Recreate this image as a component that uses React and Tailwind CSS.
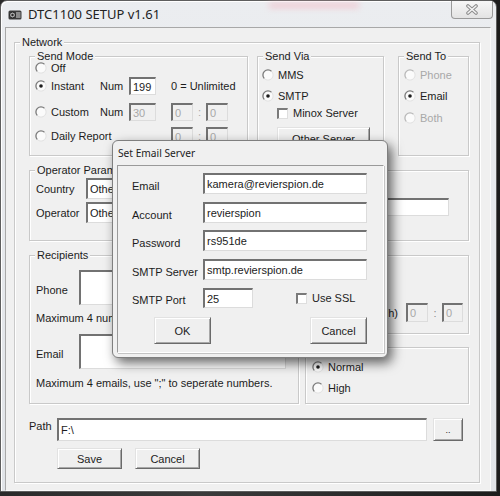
import React from 'react';

const sunk =
  'border-t-2 border-l-2 border-r border-b border-t-[#727272] border-l-[#727272] border-r-[#dcdcdc] border-b-[#dcdcdc]';
const raised =
  'bg-[#efefef] border border-t-[#e2e2e2] border-l-[#e2e2e2] border-r-[#6a6a6a] border-b-[#6a6a6a] shadow-[inset_1px_1px_0_#fff,inset_-1px_-1px_0_#a8a8a8]';

function Field({ value = '', disabled = false, className = '' }) {
  return (
    <div
      className={`${sunk} ${disabled ? 'bg-[#f0f0f0] text-[#a8a8a8]' : 'bg-white'} flex items-center pl-[2px] whitespace-nowrap overflow-hidden shrink-0 ${className}`}
    >
      {value}
    </div>
  );
}

function Button({ children, className = '' }) {
  return <div className={`${raised} flex items-center justify-center shrink-0 ${className}`}>{children}</div>;
}

function Radio({ checked = false, disabled = false }) {
  return (
    <svg width="12" height="12" viewBox="0 0 12 12" className="shrink-0">
      <circle cx="6" cy="6" r="5" fill="#fbfbfb" />
      <path d="M9.6 2.4 A5 5 0 0 0 2.4 9.6" fill="none" stroke={disabled ? '#b8b8b8' : '#7a7a7a'} strokeWidth="1.3" />
      <path d="M2.4 9.6 A5 5 0 0 0 9.6 2.4" fill="none" stroke="#e2e2e2" strokeWidth="1" />
      {checked && <circle cx="6" cy="6" r="1.8" fill="#1c1c1c" />}
    </svg>
  );
}

function Check() {
  return (
    <div className="w-[11px] h-[11px] shrink-0 bg-white border-t-2 border-l-2 border-r border-b border-t-[#7a7a7a] border-l-[#7a7a7a] border-r-[#dedede] border-b-[#dedede]" />
  );
}

function Option({ label, checked, disabled, className = '' }) {
  return (
    <div className={`flex items-center gap-[4px] shrink-0 ${disabled ? 'text-[#a8a8a8]' : ''} ${className}`}>
      <Radio checked={checked} disabled={disabled} />
      <span className="whitespace-nowrap">{label}</span>
    </div>
  );
}

// group box: border with its caption cut into the top line; pad applies to the body only
function Group({ label, className = '', pad = '', children }) {
  return (
    <div className={`border border-[#c9c9c9] shadow-[inset_1px_1px_0_#fff,1px_1px_0_#fff] shrink-0 ${className}`}>
      {label ? (
        <div className="-mt-[8px] ml-[5px] px-[2px] h-[14px] w-fit bg-[#f0f0f0] whitespace-nowrap">{label}</div>
      ) : (
        <div className="h-[6px]" />
      )}
      <div className={pad}>{children}</div>
    </div>
  );
}

function EmailServerDialog() {
  const rows = [
    ['Email', 'kamera@revierspion.de', 'mt-[7px]'],
    ['Account', 'revierspion', 'mt-[8px]'],
    ['Password', 'rs951de', 'mt-[7px]'],
    ['SMTP Server', 'smtp.revierspion.de', 'mt-[8px]'],
  ];
  return (
    <div className="absolute left-[112px] top-[140px] w-[276px] h-[218px] bg-[#f0f0f0] border border-[#7f7f7f] rounded-[6px] shadow-[4px_5px_12px_rgba(0,0,0,0.6)]">
      <div className="h-[24px] pl-[5px] flex items-center font-['Noto_Sans','Open_Sans',sans-serif] text-[10.2px] text-[#222]">
        Set Email Server
      </div>
      <div className="ml-[4px] w-[267px] h-[188px] pl-[14px] border border-t-[#9a9a9a] border-l-[#9a9a9a] border-r-[#fff] border-b-[#fff] shadow-[1px_1px_0_#c4c4c4]">
        {rows.map(([label, value, mt]) => (
          <div key={label} className={`${mt} h-[21px] flex items-center`}>
            <span className="w-[71px] pt-[4px]">{label}</span>
            <Field value={value} className="w-[164px] h-[21px]" />
          </div>
        ))}
        <div className="mt-[8px] h-[20px] flex items-center">
          <span className="w-[71px] pt-[3px]">SMTP Port</span>
          <Field value="25" className="w-[50px] h-[20px]" />
          <div className="ml-[43px]">
            <Check />
          </div>
          <span className="ml-[5px]">Use SSL</span>
        </div>
        <div className="mt-[9px] flex">
          <Button className="ml-[22px] w-[57px] h-[27px]">OK</Button>
          <Button className="ml-[99px] w-[57px] h-[27px]">Cancel</Button>
        </div>
      </div>
    </div>
  );
}

export default function App() {
  return (
    <div className="relative w-[500px] h-[496px] overflow-hidden bg-[linear-gradient(90deg,#2a2a2a,#3b3b3b_40%,#1c1c1c)] font-['Liberation_Sans',Arial,sans-serif] text-[11px] leading-[14px] text-[#1c1c1c]">
      <div className="w-[497px] h-[492px] bg-[linear-gradient(#ebedf0,#e1e4e8)] border border-[#5e5e5e] rounded-t-[7px] flex flex-col shadow-[inset_1px_1px_0_#fff]">
        {/* title bar */}
        <div className="relative h-[26px] flex items-start shrink-0">
          <span className="absolute left-[268px] top-[2px] w-[90px] h-[5px] bg-[#f3b9c4] blur-[3px] opacity-70" />
          <div className="h-[26px] flex items-center pl-[7px]">
            <svg width="14" height="11" viewBox="0 0 14 11">
              <rect x="0.5" y="1.5" width="13" height="9" rx="1.5" fill="#3c3c3c" />
              <rect x="8" y="3" width="4.5" height="6" fill="#8a8a8a" />
              <circle cx="4.5" cy="6" r="3" fill="#b0b0b0" stroke="#1e1e1e" strokeWidth="1" />
              <circle cx="4.5" cy="6" r="1.2" fill="#2a2a2a" />
            </svg>
            <span className="ml-[6px] font-['Noto_Sans','Open_Sans',sans-serif] text-[13px] text-[#222]">
              DTC1100 SETUP v1.61
            </span>
          </div>
          <div className="ml-auto mr-[3px] w-[42px] h-[18px] rounded-b-[4px] border border-t-0 border-[#9a9a9a] bg-[linear-gradient(#f7f7f7,#e3e3e3)] flex items-center justify-center">
            <svg width="14" height="11" viewBox="0 0 14 11">
              <path d="M3 2 L11 9 M11 2 L3 9" stroke="#8c8c8c" strokeWidth="3.6" strokeLinecap="round" />
              <path d="M3 2 L11 9 M11 2 L3 9" stroke="#f4f4f4" strokeWidth="1.6" strokeLinecap="round" />
            </svg>
          </div>
        </div>

        {/* client area */}
        <div className="ml-[4px] w-[486px] h-[464px] bg-[#f0f0f0] border border-t-[#a8a8a8] border-l-[#a8a8a8] border-r-[#fafafa] border-b-[#fafafa] pl-[8px] pt-[14px]">
          <Group label="Network" className="w-[466px] h-[441px]" pad="pl-[14px]">
            {/* row 1 */}
            <div className="mt-[7px] flex">
              <Group label="Send Mode" className="w-[219px] h-[100px]" pad="pl-[5px]">
                <Option label="Off" className="h-[10px]" />
                <div className="mt-[4px] h-[18px] flex items-center">
                  <Option label="Instant" checked className="w-[65px]" />
                  <span className="w-[29px]">Num</span>
                  <Field value="199" className="w-[27px] h-[18px]" />
                  <span className="ml-[15px] whitespace-nowrap">0 = Unlimited</span>
                </div>
                <div className="mt-[8px] h-[18px] flex items-center">
                  <Option label="Custom" className="w-[65px]" />
                  <span className="w-[29px]">Num</span>
                  <Field value="30" disabled className="w-[27px] h-[18px]" />
                  <Field value="0" disabled className="ml-[15px] w-[22px] h-[18px]" />
                  <span className="w-[13px] text-center text-[#a8a8a8]">:</span>
                  <Field value="0" disabled className="w-[22px] h-[18px]" />
                </div>
                <div className="mt-[6px] h-[18px] flex items-center">
                  <Option label="Daily Report" className="w-[136px]" />
                  <Field value="0" disabled className="w-[22px] h-[18px]" />
                  <span className="w-[13px] text-center text-[#a8a8a8]">:</span>
                  <Field value="0" disabled className="w-[22px] h-[18px]" />
                </div>
              </Group>

              <Group label="Send Via" className="ml-[9px] w-[127px] h-[100px]" pad="pl-[4px]">
                <Option label="MMS" className="mt-[5px] h-[14px]" />
                <Option label="SMTP" checked className="mt-[7px] h-[14px]" />
                <div className="mt-[3px] ml-[15px] h-[14px] flex items-center gap-[5px]">
                  <Check />
                  <span>Minox Server</span>
                </div>
                <Button className="mt-[7px] ml-[15px] w-[93px] h-[23px]">Other Server</Button>
              </Group>

              <Group label="Send To" className="ml-[14px] w-[71px] h-[100px]" pad="pl-[5px]">
                <Option label="Phone" disabled className="mt-[5px] h-[14px]" />
                <Option label="Email" checked className="mt-[7px] h-[14px]" />
                <Option label="Both" disabled className="mt-[8px] h-[14px]" />
              </Group>
            </div>

            {/* row 2 */}
            <div className="mt-[14px] flex">
              <Group label="Operator Parameters" className="w-[219px] h-[71px]" pad="pl-[6px]">
                <div className="mt-[1px] h-[21px] flex items-center">
                  <span className="w-[50px]">Country</span>
                  <Field value="Other" className="w-[150px] h-[21px]" />
                </div>
                <div className="mt-[3px] h-[21px] flex items-center">
                  <span className="w-[50px]">Operator</span>
                  <Field value="Other" className="w-[150px] h-[21px]" />
                </div>
              </Group>
              <Group className="ml-[9px] w-[212px] h-[71px]" pad="pl-[32px]">
                <Field className="mt-[21px] w-[159px] h-[18px]" />
              </Group>
            </div>

            {/* row 3 */}
            <div className="mt-[14px] flex">
              <Group label="Recipients" className="w-[270px] h-[149px]" pad="pl-[6px]">
                <div className="mt-[8px] flex items-center">
                  <span className="w-[43px] pt-[5px]">Phone</span>
                  <Field className="w-[207px] h-[35px]" />
                </div>
                <div className="mt-[6px] whitespace-nowrap">Maximum 4 numbers, use ";" to seperate numbers.</div>
                <div className="mt-[9px] flex items-center">
                  <span className="w-[43px] pt-[5px]">Email</span>
                  <Field className="w-[207px] h-[35px]" />
                </div>
                <div className="mt-[7px] whitespace-nowrap">Maximum 4 emails, use ";" to seperate numbers.</div>
              </Group>

              <div className="ml-[6px] w-[164px] flex flex-col">
                <Group className="w-[164px] h-[79px]" pad="pr-[5px]">
                  <div className="mt-[41px] h-[19px] flex items-center justify-end">
                    <span className="mr-[8px] whitespace-nowrap">Interval (h)</span>
                    <Field value="0" disabled className="w-[22px] h-[19px]" />
                    <span className="w-[14px] text-center text-[#8a8a8a]">:</span>
                    <Field value="0" disabled className="w-[21px] h-[19px]" />
                  </div>
                </Group>
                <Group className="mt-[13px] w-[164px] h-[57px]" pad="pl-[6px]">
                  <Option label="Normal" checked className="mt-[6px] h-[14px]" />
                  <Option label="High" className="mt-[7px] h-[14px]" />
                </Group>
              </div>
            </div>

            {/* path */}
            <div className="mt-[14px] flex items-start">
              <span className="w-[28px] mt-[1px]">Path</span>
              <Field value="F:\" className="w-[370px] h-[23px]" />
              <Button className="ml-[6px] w-[30px] h-[23px] text-[9px]">..</Button>
            </div>
            <div className="mt-[7px] flex">
              <Button className="ml-[28px] w-[65px] h-[21px]">Save</Button>
              <Button className="ml-[13px] w-[65px] h-[21px]">Cancel</Button>
            </div>
          </Group>
        </div>
      </div>

      <EmailServerDialog />
    </div>
  );
}
